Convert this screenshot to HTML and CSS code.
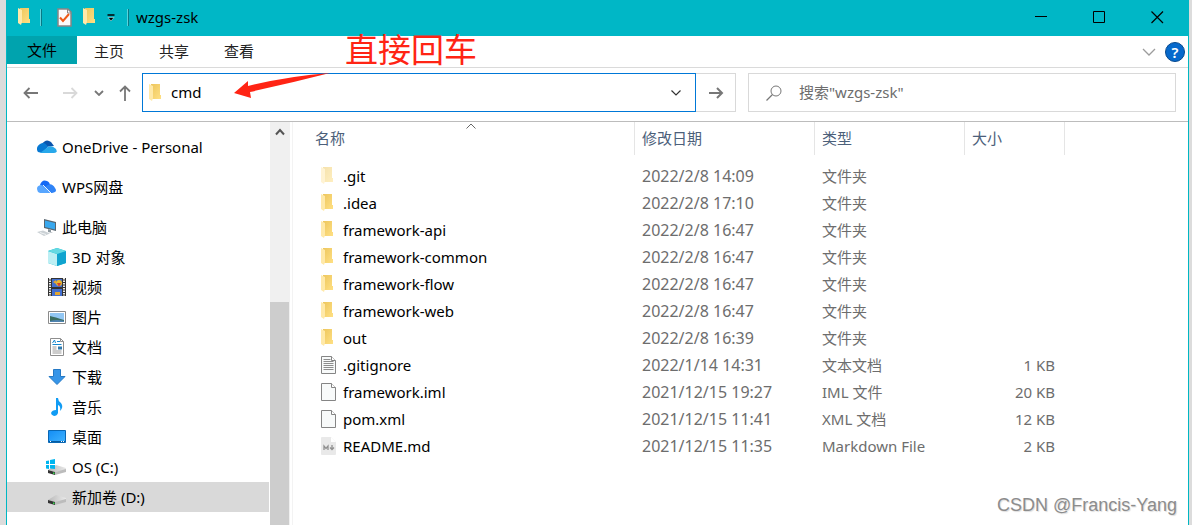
FILE: index.html
```html
<!DOCTYPE html>
<html lang="zh-CN">
<head>
<meta charset="utf-8">
<title>wzgs-zsk</title>
<link rel="stylesheet" href="styles.css">
</head>
<body>
<svg class="defs" aria-hidden="true">
  <defs>
    <linearGradient id="gold" x1="0" x2="1" y1="0" y2="1"><stop offset="0" stop-color="#edc65d"/><stop offset="1" stop-color="#ffe084"/></linearGradient>
    <linearGradient id="sky" x1="0" x2="1" y1="0" y2="1"><stop offset="0" stop-color="#138df5"/><stop offset="1" stop-color="#40b3ff"/></linearGradient>
    <linearGradient id="metal" x1="0" x2="1"><stop offset="0" stop-color="#b9b9b9"/><stop offset="1" stop-color="#e9e9e9"/></linearGradient>
    <symbol id="folder" viewBox="0 0 12 18"><path d="M2 0h9v11h1v4H2z" fill="url(#gold)"/><path d="M0 0l4 2v12l-1 3-3-2z" fill="#ffe9a9"/></symbol>
    <symbol id="page" viewBox="0 0 15 18"><path d="M.5.5h10l4 4v13H.5z" fill="#f8fafa" stroke="#858585"/><path d="M10.500.5v4h4" fill="#fff" stroke="#858585"/></symbol>
    <symbol id="drive" viewBox="0 0 18 10"><path d="M0 5L8 0l10 3v2L7 7z" fill="url(#metal)"/><path d="M0 5l7 2v3l-7-2z" fill="#333"/><path d="M7 7l11-3v3L7 10z" fill="#bcbcbc"/><path d="M5 7.500h1.500V9H5z" fill="#35e04b"/></symbol>
  </defs>
</svg>
<div class="window">
  <header class="titlebar">
    <svg class="folder-icon"><use href="#folder"/></svg>
    <span class="bar bar-first"></span>
    <button class="plain" aria-label="属性"><svg width="15" height="19" viewBox="0 0 15 19"><path d="M1 1h10l3 3v14H1z" fill="#fafafa" stroke="#8b8585" stroke-width="1.500"/><path d="M10.500 1v4H14" fill="none" stroke="#8b8585"/><path d="M3 9.500l3 3.500 6-7" fill="none" stroke="#ee5a18" stroke-width="2"/></svg></button>
    <button class="plain new-folder" aria-label="新建文件夹"><svg class="folder-icon"><use href="#folder"/></svg></button>
    <button class="plain customize" aria-label="自定义"><svg width="8" height="8" viewBox="0 0 8 8"><path d="M.5 1h7" stroke="#000" stroke-width="1.500"/><path d="M1 3.500h6L4 7z" fill="#000" stroke="#d5f5f7" stroke-width=".5"/></svg></button>
    <span class="bar"></span>
    <h1 class="title">wzgs-zsk</h1>
    <div class="caption-buttons">
      <button class="caption" aria-label="最小化"><svg width="13" height="13" viewBox="0 0 13 13"><path d="M0 5.500h12" stroke="#000"/></svg></button>
      <button class="caption" aria-label="最大化"><svg width="13" height="13" viewBox="0 0 13 13"><path d="M.5.500h11v11H.500z" fill="none" stroke="#000"/></svg></button>
      <button class="caption" aria-label="关闭"><svg width="13" height="13" viewBox="0 0 13 13"><path d="M.5.500l11.500 11.500M12 .5L.500 12" stroke="#000" stroke-width="1.200"/></svg></button>
    </div>
  </header>

  <nav class="ribbon">
    <button class="tab tab-file">文件</button>
    <button class="tab">主页</button>
    <button class="tab">共享</button>
    <button class="tab">查看</button>
    <div class="ribbon-end">
      <button class="plain" aria-label="展开功能区"><svg width="14" height="8" viewBox="0 0 14 8"><path d="M1 1l6 6 6-6" fill="none" stroke="#9c9c9c" stroke-width="1.300"/></svg></button>
      <button class="help" aria-label="帮助">?</button>
    </div>
  </nav>

  <div class="toolbar">
    <div class="history">
      <button class="plain" aria-label="后退"><svg width="16" height="12" viewBox="0 0 16 12"><path d="M15 6H1.500M6.500 1l-5 5 5 5" fill="none" stroke="#777" stroke-width="1.800"/></svg></button>
      <button class="plain forward" aria-label="前进"><svg width="16" height="12" viewBox="0 0 16 12"><path d="M1 6h13.500M9.500 1l5 5-5 5" fill="none" stroke="#d9d9d9" stroke-width="1.800"/></svg></button>
      <button class="plain recent" aria-label="最近位置"><svg width="10" height="6" viewBox="0 0 10 6"><path d="M1 1l4 4 4-4" fill="none" stroke="#777" stroke-width="1.800"/></svg></button>
      <button class="plain up" aria-label="上移"><svg width="12" height="16" viewBox="0 0 12 16"><path d="M6 16V1.500M1 6.500l5-5 5 5" fill="none" stroke="#777" stroke-width="1.800"/></svg></button>
    </div>
    <div class="location">
      <div class="address">
        <svg class="folder-icon"><use href="#folder"/></svg>
        <input class="field" type="text" value="cmd" aria-label="地址">
        <button class="plain" aria-label="以前的位置"><svg width="10" height="6" viewBox="0 0 10 6"><path d="M.5.500L5 5 9.500.500" fill="none" stroke="#333" stroke-width="1.200"/></svg></button>
      </div>
      <button class="go" aria-label="转到"><svg width="16" height="12" viewBox="0 0 16 12"><path d="M1 6h13M9 1l5 5-5 5" fill="none" stroke="#777" stroke-width="2"/></svg></button>
    </div>
    <div class="search">
      <svg width="16" height="16" viewBox="0 0 16 16"><circle cx="10" cy="6" r="5" fill="none" stroke="#777"/><path d="M6.500 9.500L.500 15.500" stroke="#777" stroke-width="1.200"/></svg>
      <input class="field" type="search" placeholder='搜索"wzgs-zsk"' aria-label="搜索">
    </div>
  </div>

  <div class="content">
    <aside class="sidebar">
      <nav class="tree">
        <a class="node root" href="#"><svg class="root-icon" viewBox="0 0 20 14"><path d="M5 4Q9-2 14 2l3 4-9 1z" fill="#0a55ad"/><path d="M1 12Q-2 7 3 4q5-3 8 3l-6 6z" fill="#0879d3"/><path d="M3 13l8-6q4-2 8 2 2 4-2 4z" fill="#28a8ea"/></svg>OneDrive - Personal</a>
        <a class="node root" href="#"><svg class="root-icon" viewBox="0 0 20 14"><path d="M3 5Q5-1 10 1q3 1 3 5L9 9z" fill="#1469f5"/><path d="M1 12q-3-6 3-7 3 0 9 8H3z" fill="#58a6ff"/><path d="M8 7q6-6 10 1 3 4-3 5h-2z" fill="#2f83f7"/><path d="M6 5l8 8" stroke="#eaf4ff"/></svg>WPS网盘</a>
        <a class="node root" href="#"><svg class="root-icon pc" viewBox="0 0 20 17"><path d="M7 0l12 3v9L7 9z" fill="#59656f"/><path d="M8 1.500l10 2.500v6.500L8 8z" fill="#39a8ee"/><path d="M11 10l3 1v2l2 1-5-1z" fill="#8b969d"/><path d="M0 13l6-1.500 7 3L7 17z" fill="#cbd1d5"/><path d="M3 13.500l6 2" stroke="#eff2f3"/></svg>此电脑</a>
        <a class="node" href="#"><svg class="node-icon" viewBox="0 0 18 18"><path d="M0 3l9-3 9 3v12l-9 3-9-3z" fill="#08bad0"/><path d="M0 3l9 3v12l-9-3z" fill="#bceff4"/><path d="M9 6l9-3v12l-9 3z" fill="#11a4cf"/><path d="M0 3l9-3 9 3-9 3z" fill="#65d9e2"/></svg>3D 对象</a>
        <a class="node" href="#"><svg class="node-icon" viewBox="0 0 18 18"><path d="M0 0h18v18H0z" fill="#333"/><path d="M4 1h10v8H4zM4 11h10v7H4z" fill="#426fd0"/><path d="M2 0v18M16 0v18" stroke="#eee" stroke-width="2" stroke-dasharray="1.500 1"/><circle cx="11" cy="5" r="3" fill="#e9b82c"/><path d="M9 5h4l-2 4z" fill="#d34131"/><path d="M5 4l3-2v4zM7 14h5v3H7z" fill="#e2a631"/></svg>视频</a>
        <a class="node" href="#"><svg class="node-icon" viewBox="0 0 18 18"><path d="M.5 3.500h17v12H.500z" fill="#fff" stroke="#8b8b8b"/><path d="M2 5h14v9H2z" fill="#92c7f4"/><path d="M2 8q5 1 14 4v2H2z" fill="#3b6e61"/><path d="M2 13q7-2 14 0v1H2z" fill="#4f83b0"/></svg>图片</a>
        <a class="node" href="#"><svg class="node-icon" viewBox="0 0 18 18"><path d="M2.500.500h10l3 3v14h-13z" fill="#fff" stroke="#8e8e8e"/><path d="M12.500.500v3h3" fill="none" stroke="#8e8e8e"/><path d="M4.500 5l2-3 1 3M9 3.500h3M4.500 6.500h9" stroke="#1688cf" fill="none"/><path d="M4.500 9h4M4.500 11h4M4.500 13h9M4.500 15h9" stroke="#999"/><path d="M10 8.500h4v3h-4z" fill="#317baf"/></svg>文档</a>
        <a class="node" href="#"><svg class="node-icon" viewBox="0 0 18 18"><path d="M5.500 1.500h7v7h4.500L9 16.500 1 8.500h4.500z" fill="#3695e8" stroke="#2579c5"/></svg>下载</a>
        <a class="node" href="#"><svg class="node-icon" viewBox="0 0 18 18"><path d="M8 0h2q0 3 3 5 3 4-1 8 1-5-2-6v8q-1 3-4 3-3-1-3-3 1-3 5-3z" fill="#119cf4"/></svg>音乐</a>
        <a class="node" href="#"><svg class="node-icon" viewBox="0 0 18 18"><path d="M.5 2.500h17v12H.500z" fill="url(#sky)" stroke="#0967b4"/><path d="M1 13.500h16" stroke="#075b9f"/><path d="M2 13.500h1M13 13.500h1M15 13.500h1" stroke="#fff"/></svg>桌面</a>
        <a class="node" href="#"><svg class="node-icon drive" viewBox="0 0 20 18"><use href="#drive" x="2" y="7" width="18" height="10"/><path d="M0 3l3-.500V6H0zM4 2l5-1v5H4zM0 7h3v4l-3-.500zM4 7h5v4l-5-.500z" fill="#00b5ef"/></svg>OS (C:)</a>
        <a class="node selected" href="#"><svg class="node-icon" viewBox="0 0 18 18"><use href="#drive" y="7" width="18" height="10"/></svg>新加卷 (D:)</a>
      </nav>
      <div class="scrollbar">
        <button class="plain scroll-up" aria-label="向上滚动"><svg width="10" height="8" viewBox="0 0 10 8"><path d="M1 6.500l4-4.500 4 4.500" fill="none" stroke="#555" stroke-width="2"/></svg></button>
        <div class="thumb"></div>
      </div>
    </aside>
    <main class="files">
      <table class="list">
        <colgroup><col class="c-name"><col class="c-date"><col class="c-type"><col class="c-size"><col></colgroup>
        <thead><tr>
          <th class="sorted">名称<svg class="sort" width="11" height="6" viewBox="0 0 11 6"><path d="M1 5.500L5.500 1 10 5.500" fill="none" stroke="#666"/></svg></th>
          <th>修改日期</th><th>类型</th><th>大小</th><td></td>
        </tr></thead>
        <tbody>
          <tr><td><span class="file hidden-file"><svg class="folder-icon"><use href="#folder"/></svg>.git</span></td><td>2022/2/8 14:09</td><td>文件夹</td><td></td></tr>
          <tr><td><span class="file"><svg class="folder-icon"><use href="#folder"/></svg>.idea</span></td><td>2022/2/8 17:10</td><td>文件夹</td><td></td></tr>
          <tr><td><span class="file"><svg class="folder-icon"><use href="#folder"/></svg>framework-api</span></td><td>2022/2/8 16:47</td><td>文件夹</td><td></td></tr>
          <tr><td><span class="file"><svg class="folder-icon"><use href="#folder"/></svg>framework-common</span></td><td>2022/2/8 16:47</td><td>文件夹</td><td></td></tr>
          <tr><td><span class="file"><svg class="folder-icon"><use href="#folder"/></svg>framework-flow</span></td><td>2022/2/8 16:47</td><td>文件夹</td><td></td></tr>
          <tr><td><span class="file"><svg class="folder-icon"><use href="#folder"/></svg>framework-web</span></td><td>2022/2/8 16:47</td><td>文件夹</td><td></td></tr>
          <tr><td><span class="file"><svg class="folder-icon"><use href="#folder"/></svg>out</span></td><td>2022/2/8 16:39</td><td>文件夹</td><td></td></tr>
          <tr><td><span class="file"><svg class="page-icon" viewBox="0 0 15 18"><use href="#page"/><path d="M2.500 3.500h7M2.500 5.500h10M2.500 7.500h10M2.500 9.500h10M2.500 11.500h10M2.500 13.500h10" stroke="#8d8d8d"/></svg>.gitignore</span></td><td>2022/1/14 14:31</td><td>文本文档</td><td>1 KB</td></tr>
          <tr><td><span class="file"><svg class="page-icon"><use href="#page"/></svg>framework.iml</span></td><td>2021/12/15 19:27</td><td>IML 文件</td><td>20 KB</td></tr>
          <tr><td><span class="file"><svg class="page-icon"><use href="#page"/></svg>pom.xml</span></td><td>2021/12/15 11:41</td><td>XML 文档</td><td>12 KB</td></tr>
          <tr><td><span class="file"><svg class="page-icon" viewBox="0 0 15 18"><path d="M1 0h9l5 5v12q0 1-1 1H1q-1 0-1-1V1q0-1 1-1z" fill="#e9e9e9"/><path d="M10 0v5h5z" fill="#fff"/><path d="M3 13V9l2 2.500L7 9v4M11 8v4M9 10.500l2 2 2-2" fill="none" stroke="#909090" stroke-width="1.300"/></svg>README.md</span></td><td>2021/12/15 11:35</td><td>Markdown File</td><td>2 KB</td></tr>
        </tbody>
      </table>
    </main>
  </div>
  <div class="note">直接回车</div>
  <svg class="arrow" viewBox="0 0 96 28" aria-hidden="true"><path d="M0 20L14 8v5Q55 3 96 0 57 10 16 19l1 6z" fill="#ff2414"/></svg>
  <div class="watermark">CSDN @Francis-Yang</div>
</div>
</body>
</html>
```
FILE: styles.css
```css
* { box-sizing: border-box; }
body {
  margin: 0;
  padding: 0 3px 0 6px;
  background: #dcdcdc;
  font: 15px/20px "Noto Sans", "Noto Sans CJK SC", sans-serif;
  color: #000;
}
button, input { font: inherit; color: inherit; }
svg { flex: none; display: block; }
.defs { position: absolute; width: 0; height: 0; }
.plain { display: flex; padding: 0; border: 0; background: none; }
.folder-icon { width: 12px; height: 18px; }

.window {
  position: relative;
  display: flex;
  flex-direction: column;
  height: 100vh;
  overflow: hidden;
  background: #fff;
  border: solid #00b7c3;
  border-width: 0 1px;
}

.titlebar { display: flex; align-items: center; height: 36px; padding: 0 2px 2px 11px; background: #00b7c6; }
.bar { width: 1px; height: 17px; background: #5bd3dc; border-right: 1px solid #087985; box-sizing: content-box; }
.bar-first { margin: 0 15px 0 10px; }
.new-folder { margin-left: 11px; }
.customize { margin: 2px 12px 0 12px; }
.title { margin: 0 0 0 7px; font: inherit; }
.caption-buttons { display: flex; margin-left: auto; }
.caption { display: flex; align-items: center; justify-content: center; width: 58px; height: 34px; padding: 0; border: 0; background: none; }

.ribbon { display: flex; height: 32px; border-bottom: 1px solid #dadada; }
.tab { width: 65px; height: 30px; padding: 0 17px; border: 0; background: none; color: #222; text-align: left; white-space: nowrap; }
.tab-file { width: 70px; height: 28px; padding: 0 20px; background: #00a3ae; color: #000; }
.ribbon-end { display: flex; align-items: center; gap: 9px; margin-left: auto; padding-right: 3px; }
.help { width: 20px; height: 20px; padding: 0; border: 1px solid #07498d; border-radius: 50%; background: #0669cc; color: #fff; line-height: 18px; font-weight: 600; }

.toolbar { display: flex; align-items: center; gap: 12px; height: 54px; padding: 0 12px 4px 16px; border-bottom: 1px solid #bcbcbc; }
.history { display: flex; align-items: center; width: 107px; }
.forward { margin-left: 23px; }
.recent { margin-left: 16px; }
.up { margin-left: 15px; }
.location { display: flex; flex: 1; min-width: 0; height: 39px; }
.address { display: flex; align-items: center; flex: 1; min-width: 0; padding: 0 14px 0 6px; border: 1px solid #0078d7; }
.field { flex: 1; min-width: 0; padding: 0 0 2px; border: 0; outline: 0; background: none; }
.address .field { padding-left: 10px; }
.go { display: flex; align-items: center; justify-content: center; width: 40px; padding: 0; border: 1px solid #d9d9d9; border-left: 0; background: none; }
.search { display: flex; align-items: center; flex: 0 1 428px; min-width: 0; width: 36%; height: 39px; padding: 0 17px; gap: 17px; border: 1px solid #d9d9d9; }
.search .field::placeholder { color: #6d6d6d; opacity: 1; }
.search .field { appearance: none; }

.content { display: flex; flex: 1; min-height: 0; }
.sidebar { display: flex; width: 286px; border-right: 1px solid #f3f3f3; padding-right: 2px; }
.tree { flex: 1; padding-top: 10px; margin-right: 1px; }
.node { display: flex; align-items: center; gap: 6px; height: 30px; padding-left: 41px; color: #000; text-decoration: none; white-space: nowrap; }
.root { gap: 5px; padding-left: 30px; }
.root + .root { margin-top: 10px; }
.root-icon { width: 20px; height: 14px; }
.pc { height: 17px; }
.node-icon { width: 18px; height: 18px; }
.drive { width: 20px; margin-left: -2px; }
.selected { background: #d9d9d9; }
.scrollbar { display: flex; flex-direction: column; gap: 160px; width: 20px; background: #f0f0f0; }
.scroll-up { height: 20px; align-items: center; justify-content: center; }
.thumb { flex: 1; width: 19px; background: #cdcdcd; }

.files { flex: 1; min-width: 0; padding-left: 15px; }
.list { width: 100%; table-layout: fixed; border-collapse: separate; border-spacing: 0; }
.c-name { width: 327px; }
.c-date { width: 180px; }
.c-type { width: 150px; }
.c-size { width: 100px; }
.list th { position: relative; height: 33px; padding: 0 8px 2px 7px; border-right: 1px solid #e5e5e5; color: #4c607a; font-weight: 400; text-align: left; }
.sort { position: absolute; top: 1px; left: 50%; transform: translateX(-50%); }
.list tbody::before { content: ""; display: block; height: 7px; }
.list tbody td { height: 27px; padding: 0 7px; color: #6d6d6d; white-space: nowrap; }
.list tbody td:first-child { padding-left: 13px; color: #000; }
.list tbody td:nth-child(2) { font-size: 16px; }
.list tbody td:nth-child(4) { padding-right: 10px; text-align: right; }
.file { display: grid; grid-template-columns: 15px 1fr; align-items: center; gap: 7px; }
.page-icon { width: 15px; height: 18px; }
.hidden-file svg { opacity: .5; }

.note { position: absolute; left: 338px; top: 28px; color: #ff2414; font: 33px/40px "Noto Sans CJK SC", sans-serif; }
.arrow { position: absolute; left: 227px; top: 73px; width: 96px; height: 28px; }
.watermark { position: absolute; right: 11px; bottom: 8px; color: #8c8c8c; font: 18px/24px "Liberation Sans", sans-serif; text-shadow: 1px 1px 1px #ddd; }
```
